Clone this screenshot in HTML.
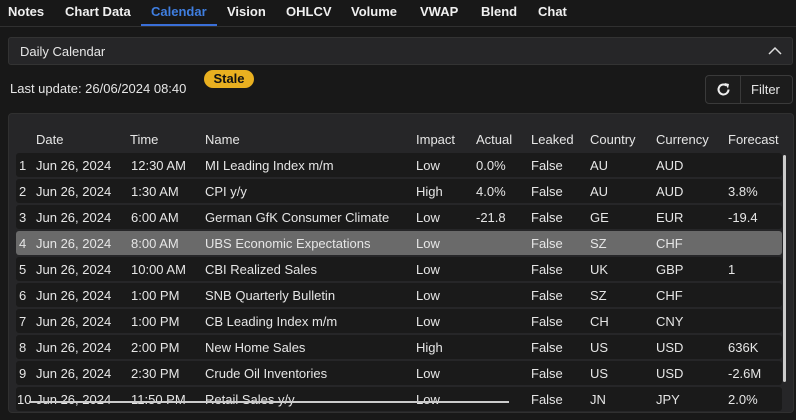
<!DOCTYPE html><html><head><style>
body{margin:0;width:796px;height:420px;background:#181818;font-family:"Liberation Sans",sans-serif;color:#e6e6e6;overflow:hidden;position:relative}
.tabs{position:absolute;top:0;left:0;width:796px;height:26px;border-bottom:1px solid #303030}
.tab{position:absolute;top:4px;font-weight:bold;font-size:13px;color:#f0f0f0}
.act{color:#3f7ee0}
.uline{position:absolute;left:141px;top:24px;width:76px;height:2px;background:#3a6fd8}
.dd{position:absolute;left:8px;top:37px;width:783px;height:26px;background:#262628;border:1px solid #333;border-radius:3px;font-size:13px}
.stale{position:absolute;left:204px;top:70px;width:50px;height:18px;border-radius:9px;background:#e9b020;color:#111;font-weight:bold;font-size:13px;text-align:center;line-height:18px}
.btn{position:absolute;left:705px;top:75px;width:86px;height:27px;border:1px solid #3a3a3a;border-radius:4px;background:#1c1c1c}
.panel{position:absolute;left:8px;top:113px;width:784px;height:298px;background:#262628;border:1px solid #303030;border-radius:4px;overflow:hidden}
.row{position:absolute;left:7px;width:766px;height:24px;background:#1a1a1a;border-radius:3px;font-size:13px}
.row span,.hd span{position:absolute;top:5px;white-space:nowrap}
.hd{position:absolute;top:13px;left:7px;font-size:13px}
.sel{background:#6a6a6a}
.sb{position:absolute;left:774px;top:41px;width:3px;height:227px;background:#ccc;border-radius:2px}
.hb{position:absolute;left:20px;top:287px;width:480px;height:2px;background:#ccc}
</style></head><body>
<div class="tabs">
<span class="tab" style="left:8px">Notes</span>
<span class="tab" style="left:65px">Chart Data</span>
<span class="tab act" style="left:151px">Calendar</span>
<span class="tab" style="left:227px">Vision</span>
<span class="tab" style="left:286px">OHLCV</span>
<span class="tab" style="left:351px">Volume</span>
<span class="tab" style="left:420px">VWAP</span>
<span class="tab" style="left:481px">Blend</span>
<span class="tab" style="left:538px">Chat</span>
<div class="uline"></div></div>
<div class="dd"><span style="position:absolute;left:11px;top:6px">Daily Calendar</span>
<svg style="position:absolute;right:10px;top:8px" width="14" height="9"><path d="M1 8 L7 2 L13 8" stroke="#ddd" stroke-width="1.5" fill="none"/></svg></div>
<div style="position:absolute;left:10px;top:81px;font-size:13px">Last update: 26/06/2024 08:40</div>
<div class="stale">Stale</div>
<div class="btn"><div style="position:absolute;left:34px;top:0;width:1px;height:27px;background:#3a3a3a"></div>
<svg style="position:absolute;left:10px;top:6px" width="15" height="15" viewBox="0 0 15 15"><path d="M12.5 7.5 A5 5 0 1 1 10.5 3.5" stroke="#eee" stroke-width="2" fill="none"/><path d="M8.5 1 L13 2 L12 6.5 Z" fill="#eee"/></svg>
<span style="position:absolute;left:45px;top:6px;font-size:13px">Filter</span></div>
<div class="panel">
<div class="hd"><span style="left:20px">Date</span><span style="left:114px">Time</span><span style="left:189px">Name</span><span style="left:400px">Impact</span><span style="left:460px">Actual</span><span style="left:515px">Leaked</span><span style="left:574px">Country</span><span style="left:640px">Currency</span><span style="left:712px">Forecast</span></div>
<div class="row" style="top:39px"><span style="left:3px">1</span><span style="left:20px">Jun 26, 2024</span><span style="left:115px">12:30 AM</span><span style="left:189px">MI Leading Index m/m</span><span style="left:400px">Low</span><span style="left:460px">0.0%</span><span style="left:515px">False</span><span style="left:574px">AU</span><span style="left:640px">AUD</span></div>
<div class="row" style="top:65px"><span style="left:3px">2</span><span style="left:20px">Jun 26, 2024</span><span style="left:115px">1:30 AM</span><span style="left:189px">CPI y/y</span><span style="left:400px">High</span><span style="left:460px">4.0%</span><span style="left:515px">False</span><span style="left:574px">AU</span><span style="left:640px">AUD</span><span style="left:712px">3.8%</span></div>
<div class="row" style="top:91px"><span style="left:3px">3</span><span style="left:20px">Jun 26, 2024</span><span style="left:115px">6:00 AM</span><span style="left:189px">German GfK Consumer Climate</span><span style="left:400px">Low</span><span style="left:460px">-21.8</span><span style="left:515px">False</span><span style="left:574px">GE</span><span style="left:640px">EUR</span><span style="left:712px">-19.4</span></div>
<div class="row sel" style="top:117px"><span style="left:3px">4</span><span style="left:20px">Jun 26, 2024</span><span style="left:115px">8:00 AM</span><span style="left:189px">UBS Economic Expectations</span><span style="left:400px">Low</span><span style="left:515px">False</span><span style="left:574px">SZ</span><span style="left:640px">CHF</span></div>
<div class="row" style="top:143px"><span style="left:3px">5</span><span style="left:20px">Jun 26, 2024</span><span style="left:115px">10:00 AM</span><span style="left:189px">CBI Realized Sales</span><span style="left:400px">Low</span><span style="left:515px">False</span><span style="left:574px">UK</span><span style="left:640px">GBP</span><span style="left:712px">1</span></div>
<div class="row" style="top:169px"><span style="left:3px">6</span><span style="left:20px">Jun 26, 2024</span><span style="left:115px">1:00 PM</span><span style="left:189px">SNB Quarterly Bulletin</span><span style="left:400px">Low</span><span style="left:515px">False</span><span style="left:574px">SZ</span><span style="left:640px">CHF</span></div>
<div class="row" style="top:195px"><span style="left:3px">7</span><span style="left:20px">Jun 26, 2024</span><span style="left:115px">1:00 PM</span><span style="left:189px">CB Leading Index m/m</span><span style="left:400px">Low</span><span style="left:515px">False</span><span style="left:574px">CH</span><span style="left:640px">CNY</span></div>
<div class="row" style="top:221px"><span style="left:3px">8</span><span style="left:20px">Jun 26, 2024</span><span style="left:115px">2:00 PM</span><span style="left:189px">New Home Sales</span><span style="left:400px">High</span><span style="left:515px">False</span><span style="left:574px">US</span><span style="left:640px">USD</span><span style="left:712px">636K</span></div>
<div class="row" style="top:247px"><span style="left:3px">9</span><span style="left:20px">Jun 26, 2024</span><span style="left:115px">2:30 PM</span><span style="left:189px">Crude Oil Inventories</span><span style="left:400px">Low</span><span style="left:515px">False</span><span style="left:574px">US</span><span style="left:640px">USD</span><span style="left:712px">-2.6M</span></div>
<div class="row" style="top:273px"><span style="left:1px">10</span><span style="left:20px">Jun 26, 2024</span><span style="left:115px">11:50 PM</span><span style="left:189px">Retail Sales y/y</span><span style="left:400px">Low</span><span style="left:515px">False</span><span style="left:574px">JN</span><span style="left:640px">JPY</span><span style="left:712px">2.0%</span></div>
<div class="sb"></div><div class="hb"></div>
</div>
</body></html>
